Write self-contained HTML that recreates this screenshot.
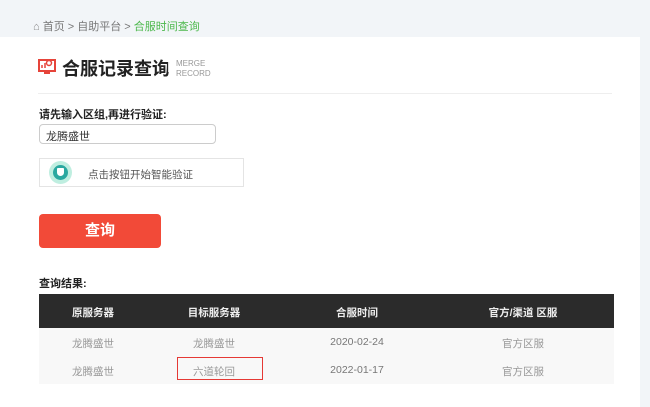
<!DOCTYPE html>
<html><head><meta charset="utf-8"><style>
*{margin:0;padding:0;box-sizing:border-box}
body{width:650px;height:407px;background:#f2f5f8;font-family:"Liberation Sans","Noto Sans CJK SC",sans-serif;position:relative;overflow:hidden}
.a{position:absolute}
.panel{left:0;top:37px;width:640px;height:370px;background:#fff}
.bc{left:33px;top:18px;font-size:11px;color:#777}
.bc b{color:#4cb84c;font-weight:normal}
.title{left:62px;top:55px;font-size:18px;font-weight:bold;color:#222}
.en{left:176px;top:59px;font-size:8px;color:#999;line-height:10px}
.sep{left:168px;top:62px;width:1px;height:10px;background:#ddd}
.hr{left:38px;top:93px;width:574px;height:1px;background:#eee}
.lbl{left:39px;top:106px;font-size:11px;font-weight:bold;color:#222}
.inp{left:39px;top:124px;width:177px;height:20px;border:1px solid #ccc;border-radius:4px;font-size:11px;padding:3px 6px;color:#333}
.cap{left:39px;top:158px;width:205px;height:29px;border:1px solid #e4e4e4}
.btn{left:39px;top:214px;width:122px;height:34px;background:#f24a38;border-radius:4px;color:#fff;font-size:15px;font-weight:bold;text-align:center;line-height:34px}
.res{left:39px;top:275px;font-size:11px;font-weight:bold;color:#222}
.th{left:39px;top:294px;width:575px;height:34px;background:#2b2b2b;color:#eee;font-size:10.5px;font-weight:bold}
.row{left:39px;width:575px;height:28px;background:#f8f8f8;color:#999;font-size:10.5px}
.row .d{color:#777}
.c{position:absolute;transform:translateX(-50%);white-space:nowrap}
</style></head><body>
<div class="a bc"><span style="color:#888">⌂</span> 首页 &gt; 自助平台 &gt; <b>合服时间查询</b></div>
<div class="a panel"></div>
<svg class="a" style="left:38px;top:57px" width="18" height="18" viewBox="0 0 18 18"><rect x="1" y="3" width="16" height="11" fill="none" stroke="#e6443a" stroke-width="2"/><rect x="6" y="15" width="6" height="2" fill="#e6443a"/><circle cx="11" cy="6" r="2.5" fill="none" stroke="#e6443a" stroke-width="1.5"/><path d="M4 11V8M7 11V6" stroke="#e6443a" stroke-width="1.5"/></svg>
<div class="a title">合服记录查询</div>
<div class="a sep"></div>
<div class="a en">MERGE<br>RECORD</div>
<div class="a hr"></div>
<div class="a lbl">请先输入区组,再进行验证:</div>
<div class="a inp">龙腾盛世</div>
<div class="a cap"></div>
<div class="a" style="left:49px;top:161px;width:23px;height:23px;border-radius:50%;background:#bfeee0"></div>
<div class="a" style="left:53px;top:165px;width:15px;height:15px;border-radius:50%;background:#2aa8a0"></div>
<div class="a" style="left:57px;top:168px;width:7px;height:8px;background:#fff;border-radius:1px 1px 4px 4px"></div>
<div class="a" style="left:88px;top:167px;font-size:10.5px;color:#555">点击按钮开始智能验证</div>
<div class="a btn">查询</div>
<div class="a res">查询结果:</div>
<div class="a th"><span class="c" style="left:54px;top:11px">原服务器</span><span class="c" style="left:175px;top:11px">目标服务器</span><span class="c" style="left:318px;top:11px">合服时间</span><span class="c" style="left:484px;top:11px">官方/渠道 区服</span></div>
<div class="a row" style="top:328px"><span class="c" style="left:54px;top:8px">龙腾盛世</span><span class="c" style="left:175px;top:8px">龙腾盛世</span><span class="c d" style="left:318px;top:8px">2020-02-24</span><span class="c" style="left:484px;top:8px">官方区服</span></div>
<div class="a row" style="top:356px"><span class="c" style="left:54px;top:8px">龙腾盛世</span><span class="c" style="left:175px;top:8px">六道轮回</span><span class="c d" style="left:318px;top:8px">2022-01-17</span><span class="c" style="left:484px;top:8px">官方区服</span></div>
<div class="a" style="left:177px;top:357px;width:86px;height:23px;border:1.5px solid #e53935"></div>
</body></html>
